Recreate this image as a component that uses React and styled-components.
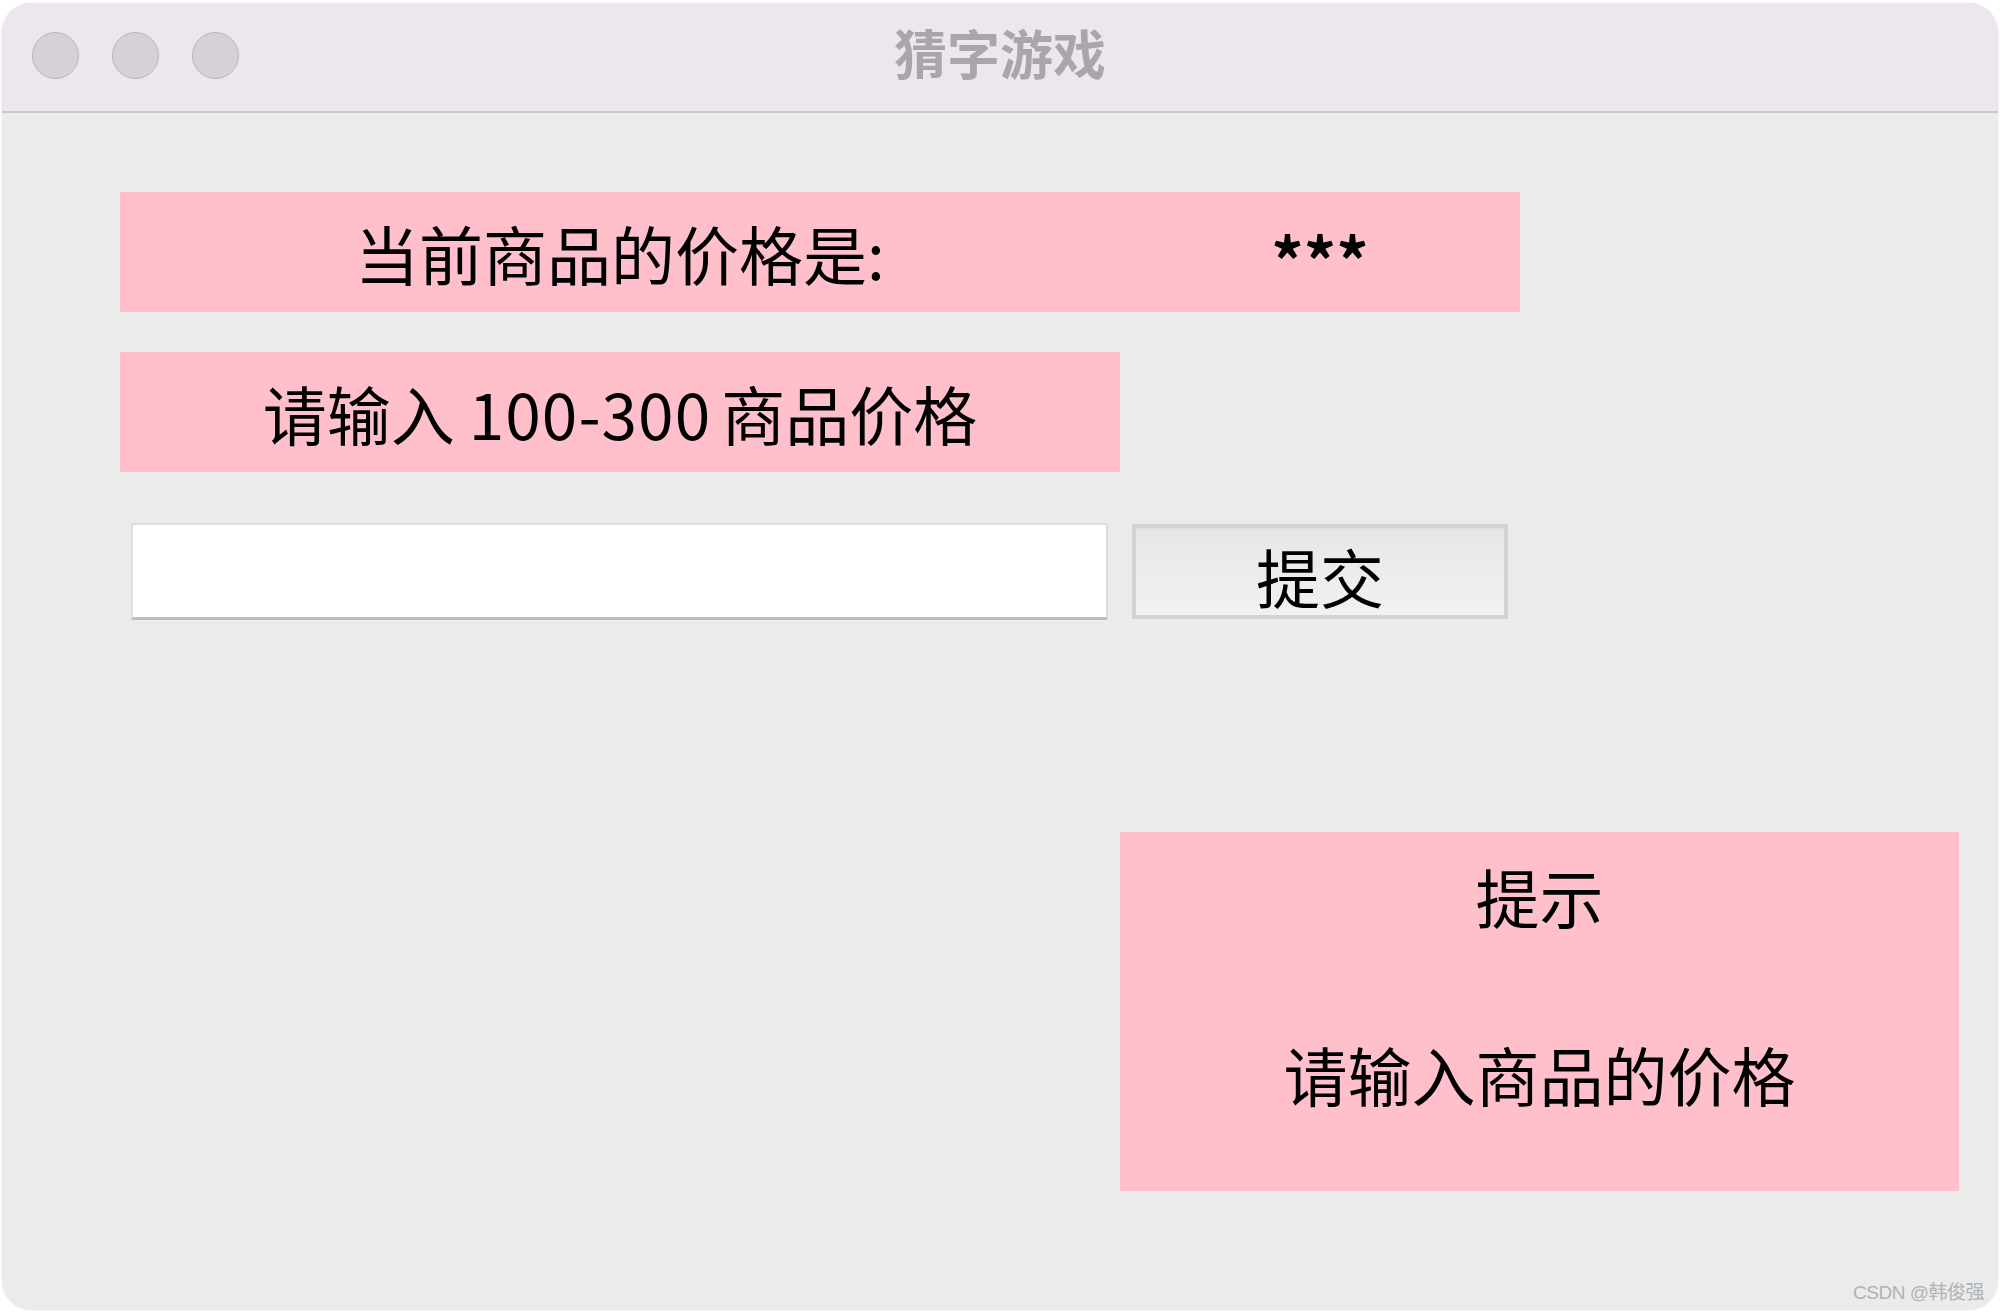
import React from "react";
import styled, { createGlobalStyle } from "styled-components";

const Global = createGlobalStyle`
  html, body { margin: 0; padding: 0; background: #ffffff; }
  body { font-family: "Noto Sans CJK SC", "Noto Sans", sans-serif; }
  * { box-sizing: border-box; }
`;

const Window = styled.div`
  position: relative;
  width: 1996px;
  height: 1307px;
  margin: 3px 2px 2px;
  border-radius: 30px;
  overflow: hidden;
  background: #ebebeb;
  box-shadow: 0 0 0 1px rgba(0, 0, 0, 0.05);
  display: flex;
  flex-direction: column;
`;

const TitleBar = styled.div`
  height: 110px;
  flex: none;
  background: #ede6ed;
  border-bottom: 2px solid #c9c9c9;
  display: grid;
  grid-template-columns: 1fr auto 1fr;
  align-items: center;
`;

const Lights = styled.div`
  display: flex;
  gap: 33px;
  padding-left: 30px;
  margin-bottom: 4px;
`;

const Light = styled.span`
  width: 47px;
  height: 47px;
  border-radius: 50%;
  background: #d6d1d6;
  border: 1.5px solid #b8b3b8;
`;

const Title = styled.div`
  font-size: 53px;
  font-weight: 700;
  line-height: 1;
  color: #aaa5aa;
  margin-bottom: 10px;
`;

const Content = styled.div`
  display: grid;
  grid-template-columns: 1000px 400px 439px;
  grid-template-rows: 120px 40px 120px 51px 97px 212px 359px;
  padding: 79px 0 0 118px;
`;

const PinkLabel = styled.div`
  grid-row: ${(p) => p.$row};
  grid-column: ${(p) => p.$col};
  background: #ffc0cb;
  color: #000;
  font-size: 64px;
  font-weight: ${(p) => (p.$bold ? 700 : 400)};
  padding-top: ${(p) => p.$shift || 0}px;
  display: flex;
  align-items: center;
  justify-content: center;
  white-space: pre;
`;

const Num = styled.span`
  margin: 0 10px 0 14px;
  letter-spacing: 1px;
`;

const InputCell = styled.div`
  grid-row: 5;
  grid-column: 1;
  padding: 0 12px 0 11px;
  display: flex;
  align-items: center;
`;

const TextInput = styled.input`
  width: 100%;
  height: 97px;
  background: #ffffff;
  border: 2px solid #dedede;
  border-bottom: 3px solid #bdbdbd;
  outline: none;
  font-size: 40px;
`;

const ButtonCell = styled.div`
  grid-row: 5;
  grid-column: 2;
  padding: 0 12px;
  display: flex;
  align-items: center;
`;

const SubmitButton = styled.button`
  width: 100%;
  height: 95px;
  border: 4px solid #d3d3d3;
  background: linear-gradient(#e7e7e7, #f1f1f1);
  box-shadow: inset 0 2px 0 #e0e0e0;
  color: #000;
  font-family: "Noto Sans CJK SC", sans-serif;
  font-size: 64px;
  padding: 6px 0 0;
  display: flex;
  align-items: center;
  justify-content: center;
`;

const TipBox = styled.div`
  grid-row: 7;
  grid-column: 2 / 4;
  background: #ffc0cb;
  color: #000;
  font-size: 64px;
  line-height: 89px;
  text-align: center;
  padding-top: 19px;
  white-space: pre;
`;

const Watermark = styled.div`
  position: absolute;
  right: 14px;
  bottom: 6px;
  font-family: "Liberation Sans", "Noto Sans CJK SC", sans-serif;
  font-size: 19px;
  color: #b2b2b2;
  letter-spacing: -0.5px;
`;

export default function App() {
  return (
    <>
      <Global />
      <Window>
        <TitleBar>
          <Lights>
            <Light />
            <Light />
            <Light />
          </Lights>
          <Title>猜字游戏</Title>
          <div />
        </TitleBar>
        <Content>
          <PinkLabel $row={1} $col={1}>当前商品的价格是:</PinkLabel>
          <PinkLabel $row={1} $col={2} $bold $shift={12}>***</PinkLabel>
          <PinkLabel $row={3} $col={1}>
            请输入<Num>100-300</Num>商品价格
          </PinkLabel>
          <InputCell>
            <TextInput type="text" />
          </InputCell>
          <ButtonCell>
            <SubmitButton>提交</SubmitButton>
          </ButtonCell>
          <TipBox>{"提示\n\n请输入商品的价格"}</TipBox>
        </Content>
        <Watermark>CSDN @韩俊强</Watermark>
      </Window>
    </>
  );
}
